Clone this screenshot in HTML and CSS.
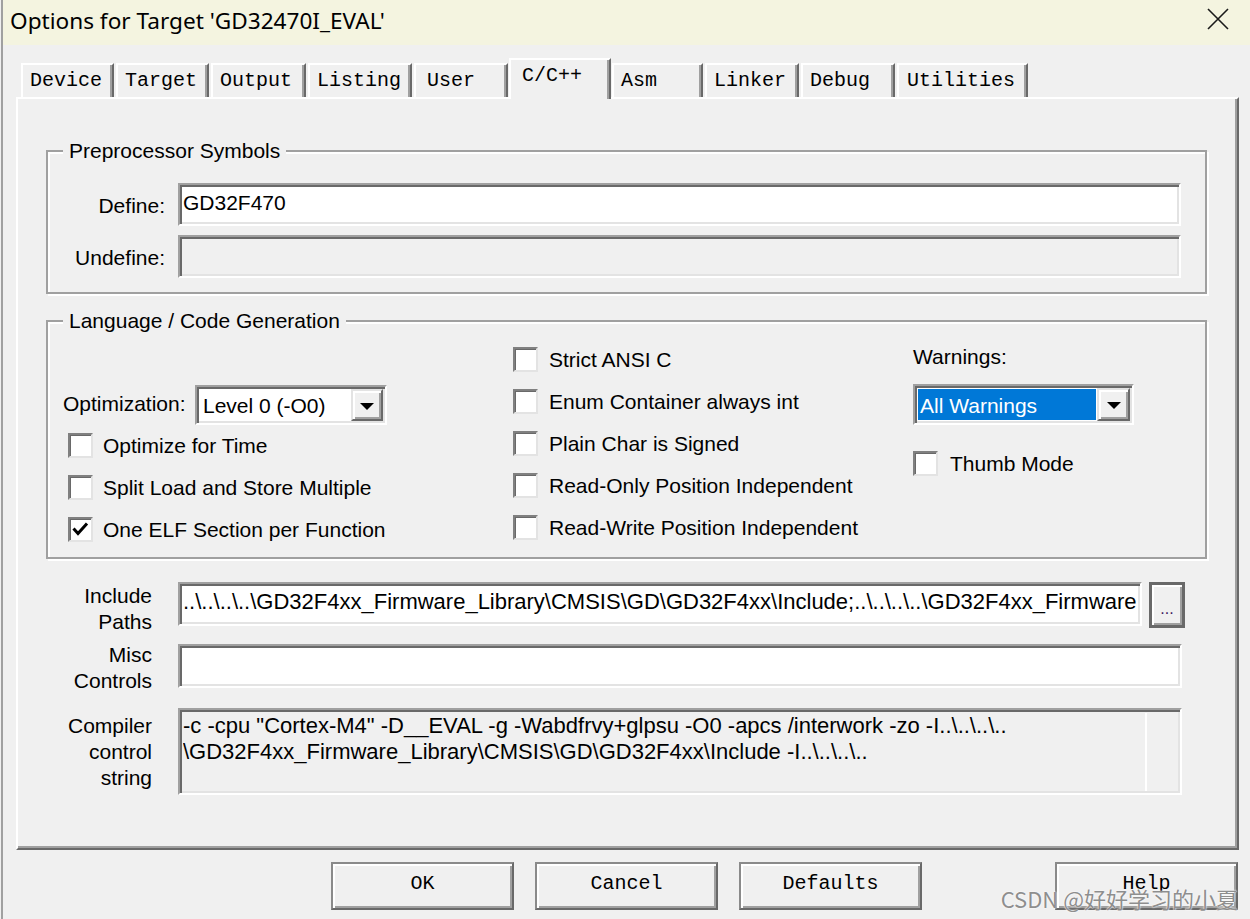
FILE: index.html
```html
<!DOCTYPE html>
<html>
<head>
<meta charset="utf-8">
<title>Options for Target</title>
<link rel="stylesheet" href="styles.css">
</head>
<body>
<div class="window">
  <div class="titlebar">
    <span class="title">Options for Target 'GD32470I_EVAL'</span>
    <svg class="close" width="22" height="22" viewBox="0 0 22 22"><path d="M1 1 L21 21 M21 1 L1 21" stroke="#1a1a1a" stroke-width="1.6" fill="none"/></svg>
  </div>
  <div class="client">
    <div class="tabs">
      <div class="tab t-device">Device</div>
      <div class="tab t-target">Target</div>
      <div class="tab t-output">Output</div>
      <div class="tab t-listing">Listing</div>
      <div class="tab t-user">User</div>
      <div class="tab active t-cc">C/C++</div>
      <div class="tab t-asm">Asm</div>
      <div class="tab t-linker">Linker</div>
      <div class="tab t-debug">Debug</div>
      <div class="tab t-util">Utilities</div>
    </div>
    <div class="panel">
      <div class="group g-pre">
        <div class="legend">Preprocessor Symbols</div>
        <div class="pre-grid">
          <span class="lbl">Define:</span>
          <div class="edit pre-edit"><span class="edit-text">GD32F470</span></div>
          <span class="lbl">Undefine:</span>
          <div class="edit pre-edit disabled"></div>
        </div>
      </div>
      <div class="group g-lang">
        <div class="legend">Language / Code Generation</div>
        <div class="lang">
          <div class="col col1">
            <div class="optrow">
              <span class="optlbl">Optimization:</span>
              <div class="combo opt-combo">
                <span class="combo-text">Level 0 (-O0)</span>
                <span class="combo-btn"><i class="tri"></i></span>
              </div>
            </div>
            <div class="checks c1">
              <div class="check"><span class="box"></span><span>Optimize for Time</span></div>
              <div class="check"><span class="box"></span><span>Split Load and Store Multiple</span></div>
              <div class="check"><span class="box"><svg width="21" height="21" viewBox="0 0 21 21"><path d="M3.5 9.5 L8 14.5 L17 4.5" stroke="#000" stroke-width="3" fill="none"/></svg></span><span>One ELF Section per Function</span></div>
            </div>
          </div>
          <div class="col col2">
            <div class="checks c2">
              <div class="check"><span class="box"></span><span>Strict ANSI C</span></div>
              <div class="check"><span class="box"></span><span>Enum Container always int</span></div>
              <div class="check"><span class="box"></span><span>Plain Char is Signed</span></div>
              <div class="check"><span class="box"></span><span>Read-Only Position Independent</span></div>
              <div class="check"><span class="box"></span><span>Read-Write Position Independent</span></div>
            </div>
          </div>
          <div class="col col3">
            <div class="warn-lbl">Warnings:</div>
            <div class="combo warn-combo">
              <span class="combo-sel">All Warnings</span>
              <span class="combo-btn"><i class="tri"></i></span>
            </div>
            <div class="check thumb"><span class="box"></span><span>Thumb Mode</span></div>
          </div>
        </div>
      </div>
      <div class="rows">
        <div class="row r1">
          <span class="rlabel">Include<br>Paths</span>
          <div class="edit inc-edit"><span class="path-text">..\..\..\..\GD32F4xx_Firmware_Library\CMSIS\GD\GD32F4xx\Include;..\..\..\..\GD32F4xx_Firmware</span></div>
          <div class="dots-btn">...</div>
        </div>
        <div class="row r2">
          <span class="rlabel">Misc<br>Controls</span>
          <div class="edit misc-edit"></div>
        </div>
        <div class="row r3">
          <span class="rlabel">Compiler<br>control<br>string</span>
          <div class="edit ctrl-edit">
            <div class="ctrl-text">
              <div class="ln">-c -cpu "Cortex-M4" -D__EVAL -g -Wabdfrvy+glpsu -O0 -apcs /interwork -zo -I..\..\..\..</div>
              <div class="ln">\GD32F4xx_Firmware_Library\CMSIS\GD\GD32F4xx\Include -I..\..\..\..</div>
            </div>
            <div class="vscroll"></div>
          </div>
        </div>
      </div>
    </div>
    <div class="buttons">
      <div class="btn">OK</div>
      <div class="btn">Cancel</div>
      <div class="btn">Defaults</div>
      <div class="btn help">Help</div>
    </div>
  </div>
  <div class="watermark">CSDN @好好学习的小夏</div>
</div>
</body>
</html>
```

FILE: styles.css
```css
* { box-sizing: border-box; }

body {
  margin: 0;
  width: 1250px;
  height: 919px;
  overflow: hidden;
  background: #f0f0f0;
  font-family: "Liberation Sans", Arial, sans-serif;
  font-size: 21px;
  line-height: 26px;
  color: #000;
}

.window {
  position: relative;
  width: 1249px;
  height: 919px;
  margin-left: 1px;
  border-left: 2px solid #a0a0a0;
}

/* title bar */
.titlebar {
  display: flex;
  align-items: flex-start;
  height: 45px;
  background: #f4f4e0;
  padding: 6px 21px 0 7px;
}
.title {
  font-family: "Noto Sans", "Open Sans", sans-serif;
  font-size: 22.6px;
  line-height: 30px;
  color: #000;
}
.close { margin-left: auto; margin-top: 2px; }

/* client */
.client { padding-top: 13px; }

.tabs {
  display: flex;
  align-items: flex-end;
  height: 39px;
  margin-left: 18px;
  gap: 2px;
}
.tab {
  position: relative;
  z-index: 1;
  height: 34px;
  background: #f0f0f0;
  border-top: 2px solid #fff;
  border-left: 2px solid #fff;
  border-right: 2px solid #696969;
  box-shadow: inset -2px 0 #a0a0a0;
  padding-left: 7px;
  font-family: "Liberation Mono", "DejaVu Sans Mono", monospace;
  font-size: 20px;
  line-height: 32px;
  white-space: nowrap;
}
.tab.active {
  height: 41px;
  margin-bottom: -2px;
  margin-left: -1px;
  margin-right: -1px;
  padding-left: 11px;
  line-height: 31px;
}
.t-device { width: 93px; }
.t-target { width: 93px; }
.t-output { width: 95px; }
.t-listing { width: 104px; }
.t-user { width: 94px; padding-left: 11px; }
.t-cc { width: 102px; }
.t-asm { width: 91px; }
.t-linker { width: 94px; }
.t-debug { width: 94px; }
.t-util { width: 131px; padding-left: 8px; }

.panel {
  width: 1223px;
  height: 753px;
  margin-left: 13px;
  border: 2px solid;
  border-color: #fff #696969 #696969 #fff;
  box-shadow: inset -2px -2px #a0a0a0;
  padding: 51px 0 0 28px;
}

/* group boxes */
.group {
  width: 1161px;
  border: 2px solid #a0a0a0;
  box-shadow: inset 2px 2px #fff, 2px 2px #fff;
}
.legend {
  width: max-content;
  height: 26px;
  margin: -14px 0 0 15px;
  padding: 0 6px;
  background: #f0f0f0;
  font-size: 21px;
  line-height: 26px;
}
.g-lang { margin-top: 26px; }

.pre-grid {
  display: grid;
  grid-template-columns: 117px 1003px;
  grid-auto-rows: 43px;
  column-gap: 13px;
  row-gap: 9px;
  align-items: center;
  margin-top: 19px;
  padding-bottom: 14px;
}
.lbl { text-align: right; padding-top: 2px; }

/* edit boxes */
.edit {
  background: #fff;
  border: 2px solid;
  border-color: #a0a0a0 #fff #fff #a0a0a0;
  box-shadow: inset 2px 2px #696969, inset -2px -2px #e3e3e3;
  padding: 5px 3px 0 3px;
  overflow: hidden;
  white-space: nowrap;
}
.pre-edit { height: 43px; }
.edit.disabled { background: #f0f0f0; }
.path-text { font-size: 22px; }

/* language grid */
.lang {
  display: grid;
  grid-template-columns: 465px 400px 1fr;
  padding-bottom: 15px;
}
.col1 { padding: 51px 0 0 15px; }
.col2 { padding-top: 12px; }
.col3 { padding-top: 10px; }

.optrow {
  display: flex;
  align-items: flex-start;
  height: 41px;
}
.optlbl { width: 132px; margin-top: 6px; }

.combo {
  display: flex;
  background: #fff;
  border: 2px solid;
  border-color: #a0a0a0 #fff #fff #a0a0a0;
  box-shadow: inset 2px 2px #696969, inset -2px -2px #e3e3e3;
  padding: 2px;
}
.opt-combo { width: 192px; height: 40px; }
.combo-text {
  flex: 1;
  display: flex;
  align-items: center;
  padding: 2px 0 0 4px;
  white-space: nowrap;
}
.combo-btn {
  display: flex;
  align-items: center;
  justify-content: center;
  width: 32px;
  background: #f0f0f0;
  border: 2px solid;
  border-color: #e3e3e3 #696969 #696969 #e3e3e3;
  box-shadow: inset 2px 2px #fff, inset -2px -2px #a0a0a0;
}
.tri {
  width: 0;
  height: 0;
  border-left: 7px solid transparent;
  border-right: 7px solid transparent;
  border-top: 7px solid #000;
  margin-top: 2px;
}

.warn-lbl { height: 26px; }
.warn-combo {
  width: 221px;
  height: 41px;
  margin-top: 14px;
}
.combo-sel {
  width: 178px;
  margin: 1px;
  background: #0078d7;
  color: #fff;
  display: flex;
  align-items: center;
  padding: 2px 0 0 2px;
  white-space: nowrap;
}
.warn-combo .combo-btn { width: 33px; }

.checks {
  display: flex;
  flex-direction: column;
  gap: 16px;
}
.c1 { margin-top: 6px; padding-left: 5px; }
.check {
  display: flex;
  align-items: center;
  gap: 10px;
  height: 26px;
  white-space: nowrap;
}
.check > span:last-child { padding-top: 2px; }
.c2 .check { gap: 11px; }
.thumb { margin-top: 25px; gap: 12px; }
.box {
  flex: none;
  width: 25px;
  height: 25px;
  background: #fff;
  border: 2px solid;
  border-color: #808080 #e3e3e3 #e3e3e3 #808080;
  box-shadow: inset 1px 1px #696969;
}
.box svg { display: block; }

/* bottom rows */
.rows { margin-top: 22px; }
.row {
  display: flex;
  align-items: flex-start;
}
.rlabel {
  width: 106px;
  margin-right: 26px;
  padding-top: 2px;
  text-align: right;
}
.r1 .inc-edit { width: 964px; height: 44px; margin-top: 1px; }
.dots-btn {
  width: 36px;
  height: 46px;
  margin: 1px 0 0 7px;
  background: #f0f0f0;
  border: 3px solid #696969;
  box-shadow: inset 2px 2px #fff, inset -2px -2px #a0a0a0;
  font-size: 16px;
  line-height: 16px;
  text-align: center;
  padding-top: 16px;
  color: #402060;
}
.r2 { margin-top: 5px; }
.misc-edit { width: 1004px; height: 44px; margin-top: 4px; }
.r3 { margin-top: 17px; }
.ctrl-edit {
  display: flex;
  width: 1004px;
  height: 87px;
  margin-top: -3px;
  background: #f0f0f0;
  padding: 3px 2px 2px 3px;
}
.ctrl-text { flex: 1; overflow: hidden; font-size: 22px; }
.ln { white-space: nowrap; }
.vscroll {
  width: 33px;
  border-left: 2px solid #fff;
}

/* buttons */
.buttons {
  display: flex;
  gap: 21px;
  margin-top: 12px;
  padding-left: 328px;
}
.btn {
  width: 183px;
  height: 48px;
  border: 2px solid;
  border-color: #8a8a8a #696969 #696969 #8a8a8a;
  box-shadow: inset 2px 2px #fff, inset -2px -2px #a0a0a0;
  font-family: "Liberation Mono", "DejaVu Sans Mono", monospace;
  font-size: 20px;
  line-height: 40px;
  text-align: center;
}
.help { margin-left: 112px; }

.watermark {
  position: absolute;
  right: 12px;
  bottom: 7px;
  font-family: "Noto Sans CJK SC", "Noto Sans", sans-serif;
  font-size: 22px;
  line-height: 28px;
  color: #8e8e8e;
  text-shadow: 0 0 2px #fff, 0 0 1px #fff;
  white-space: nowrap;
}
```
